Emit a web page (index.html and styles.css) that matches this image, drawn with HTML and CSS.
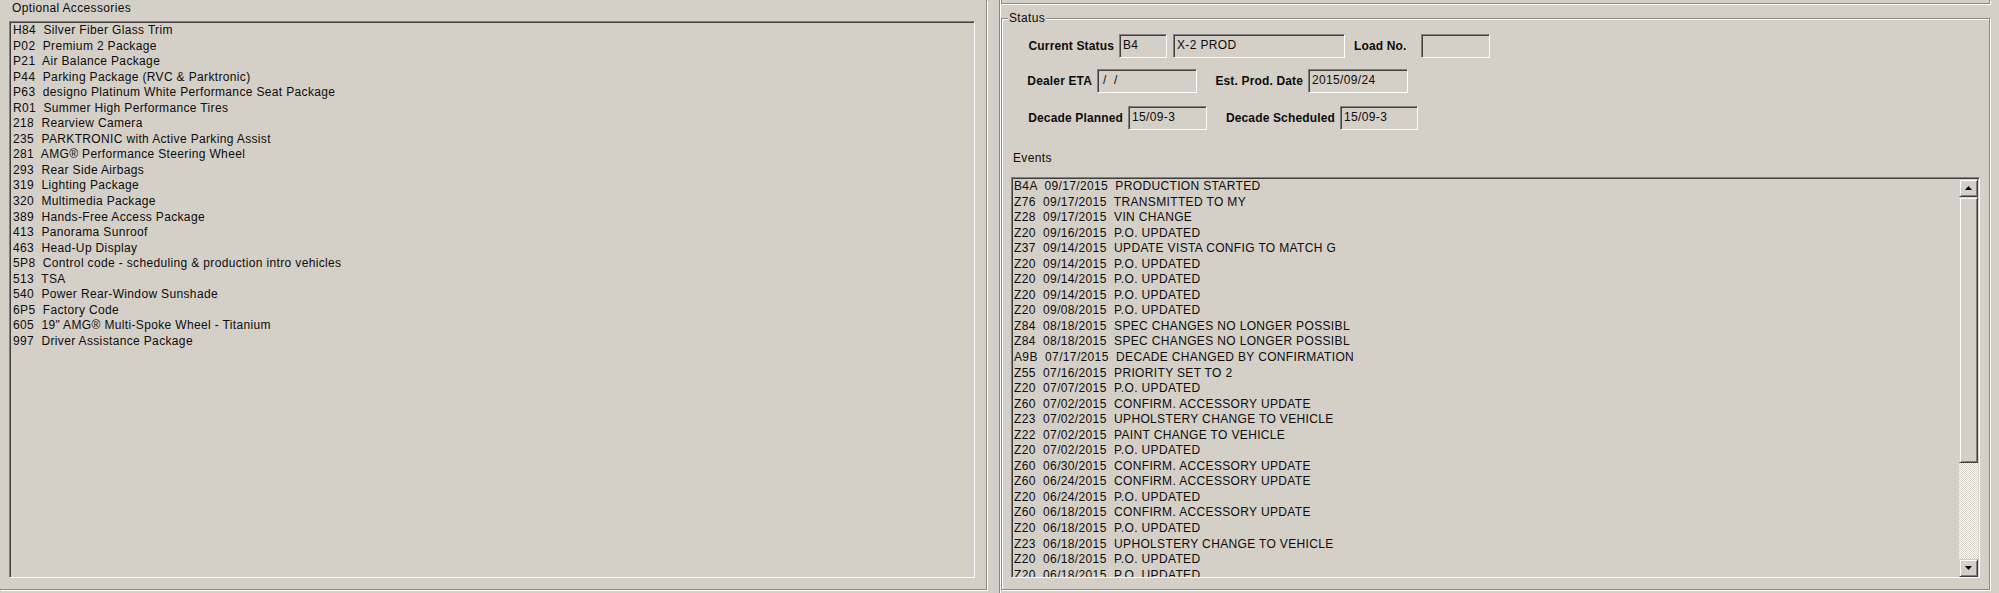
FILE: index.html
```
<!DOCTYPE html>
<html lang="en">
<head>
    <meta charset="UTF-8">
    <title>Vehicle Status</title>
    <link rel="stylesheet" href="styles.css">
</head>
<body>

<div class="window">

    <section class="accessories">
        <div class="caption">Optional Accessories</div>
        <div class="listbox accessory-list">
            <div class="row">H84  Silver Fiber Glass Trim</div>
            <div class="row">P02  Premium 2 Package</div>
            <div class="row">P21  Air Balance Package</div>
            <div class="row">P44  Parking Package (RVC &amp; Parktronic)</div>
            <div class="row">P63  designo Platinum White Performance Seat Package</div>
            <div class="row">R01  Summer High Performance Tires</div>
            <div class="row">218  Rearview Camera</div>
            <div class="row">235  PARKTRONIC with Active Parking Assist</div>
            <div class="row">281  AMG® Performance Steering Wheel</div>
            <div class="row">293  Rear Side Airbags</div>
            <div class="row">319  Lighting Package</div>
            <div class="row">320  Multimedia Package</div>
            <div class="row">389  Hands-Free Access Package</div>
            <div class="row">413  Panorama Sunroof</div>
            <div class="row">463  Head-Up Display</div>
            <div class="row">5P8  Control code - scheduling &amp; production intro vehicles</div>
            <div class="row">513  TSA</div>
            <div class="row">540  Power Rear-Window Sunshade</div>
            <div class="row">6P5  Factory Code</div>
            <div class="row">605  19" AMG® Multi-Spoke Wheel - Titanium</div>
            <div class="row">997  Driver Assistance Package</div>
        </div>
    </section>

    <section class="side">
        <div class="top-strip"></div>

        <div class="groupbox">
            <div class="groupbox-title">Status</div>

            <div class="field-row row-first">
                <label class="lbl lbl-status">Current Status</label>
                <div class="field f-code">B4</div>
                <div class="field f-desc">X-2 PROD</div>
                <label class="lbl lbl-load">Load No.</label>
                <div class="field f-load"></div>
            </div>

            <div class="field-row row-second">
                <label class="lbl lbl-eta">Dealer ETA</label>
                <div class="field f-eta">/  /</div>
                <label class="lbl lbl-prod">Est. Prod. Date</label>
                <div class="field f-prod">2015/09/24</div>
            </div>

            <div class="field-row row-third">
                <label class="lbl lbl-planned">Decade Planned</label>
                <div class="field f-planned">15/09-3</div>
                <label class="lbl lbl-sched">Decade Scheduled</label>
                <div class="field f-sched">15/09-3</div>
            </div>

            <div class="caption events-caption">Events</div>

            <div class="listbox events">
                <div class="event-rows">
                    <div class="row">B4A  09/17/2015  PRODUCTION STARTED</div>
                    <div class="row">Z76  09/17/2015  TRANSMITTED TO MY</div>
                    <div class="row">Z28  09/17/2015  VIN CHANGE</div>
                    <div class="row">Z20  09/16/2015  P.O. UPDATED</div>
                    <div class="row">Z37  09/14/2015  UPDATE VISTA CONFIG TO MATCH G</div>
                    <div class="row">Z20  09/14/2015  P.O. UPDATED</div>
                    <div class="row">Z20  09/14/2015  P.O. UPDATED</div>
                    <div class="row">Z20  09/14/2015  P.O. UPDATED</div>
                    <div class="row">Z20  09/08/2015  P.O. UPDATED</div>
                    <div class="row">Z84  08/18/2015  SPEC CHANGES NO LONGER POSSIBL</div>
                    <div class="row">Z84  08/18/2015  SPEC CHANGES NO LONGER POSSIBL</div>
                    <div class="row">A9B  07/17/2015  DECADE CHANGED BY CONFIRMATION</div>
                    <div class="row">Z55  07/16/2015  PRIORITY SET TO 2</div>
                    <div class="row">Z20  07/07/2015  P.O. UPDATED</div>
                    <div class="row">Z60  07/02/2015  CONFIRM. ACCESSORY UPDATE</div>
                    <div class="row">Z23  07/02/2015  UPHOLSTERY CHANGE TO VEHICLE</div>
                    <div class="row">Z22  07/02/2015  PAINT CHANGE TO VEHICLE</div>
                    <div class="row">Z20  07/02/2015  P.O. UPDATED</div>
                    <div class="row">Z60  06/30/2015  CONFIRM. ACCESSORY UPDATE</div>
                    <div class="row">Z60  06/24/2015  CONFIRM. ACCESSORY UPDATE</div>
                    <div class="row">Z20  06/24/2015  P.O. UPDATED</div>
                    <div class="row">Z60  06/18/2015  CONFIRM. ACCESSORY UPDATE</div>
                    <div class="row">Z20  06/18/2015  P.O. UPDATED</div>
                    <div class="row">Z23  06/18/2015  UPHOLSTERY CHANGE TO VEHICLE</div>
                    <div class="row">Z20  06/18/2015  P.O. UPDATED</div>
                    <div class="row">Z20  06/18/2015  P.O. UPDATED</div>
                </div>
                <div class="scrollbar">
                    <div class="sb-btn">
                        <svg width="7" height="4" viewBox="0 0 7 4"><path d="M0 4h7L3.5 0z"/></svg>
                    </div>
                    <div class="sb-thumb"></div>
                    <div class="sb-track"></div>
                    <div class="sb-btn">
                        <svg width="7" height="4" viewBox="0 0 7 4"><path d="M0 0h7L3.5 4z"/></svg>
                    </div>
                </div>
            </div>
        </div>
    </section>

</div>

</body>
</html>
```

FILE: styles.css
```
* {
    box-sizing: border-box;
}
body {
    margin: 0;
    background-color: #d4d0c8;
    color: #0c0c0c;
    font-family: "Liberation Sans", Arial, sans-serif;
    font-size: 12px;
    letter-spacing: 0.35px;
    overflow: hidden;
}
.window {
    display: flex;
    height: 593px;
}

/* left side: accessories */
.accessories {
    width: 987px;
    height: 590px;
    border-right: 1px solid #8c8a84;
    border-bottom: 1px solid #8c8a84;
    box-shadow: 1px 1px 0 #fff;
}
.caption {
    height: 16px;
    line-height: 16px;
    padding-left: 12px;
}
.listbox {
    border: 1px solid;
    border-color: #808080 #fff #fff #808080;
    box-shadow: inset 1px 1px #404040, inset -1px -1px #d4d0c8;
}
.accessory-list {
    margin: 5px 0 0 9px;
    width: 966px;
    height: 557px;
    padding: 1px 0 0 3px;
}
.row {
    height: 15.56px;
    line-height: 15.56px;
    white-space: pre;
}

/* right side: status */
.side {
    flex: 1;
    margin-left: 12px;
    padding-left: 1px;
    border-left: 1px solid #8c8a84;
    box-shadow: inset 1px 0 #fff;
}
.top-strip {
    width: 989px;
    height: 4px;
    border: 1px solid #8c8a84;
    border-top: none;
    box-shadow: 1px 1px 0 #fff;
}
.groupbox {
    width: 989px;
    height: 572px;
    margin-top: 14px;
    border: 1px solid #8c8a84;
    box-shadow: inset 1px 1px #fff, 1px 1px 0 #fff;
}
.groupbox-title {
    width: max-content;
    margin: -9px 0 0 6px;
    padding: 0 1px;
    line-height: 16px;
    background-color: #d4d0c8;
}
.field-row {
    display: flex;
    align-items: center;
    height: 24px;
}
.row-first {
    margin-top: 8px;
}
.row-second {
    margin-top: 11px;
}
.row-third {
    margin-top: 13px;
}
.lbl {
    font-weight: bold;
    letter-spacing: 0.15px;
    text-align: right;
    padding-right: 5px;
    white-space: nowrap;
}
.field {
    height: 24px;
    line-height: 20px;
    padding-left: 3px;
    white-space: pre;
    border: 1px solid;
    border-color: #808080 #fff #fff #808080;
    box-shadow: inset 1px 1px #404040, inset -1px -1px #d4d0c8;
}
.lbl-status { width: 117px; }
.f-code { width: 48px; }
.f-desc { width: 172px; margin-left: 6px; }
.lbl-load {
    width: 76px;
    text-align: left;
    padding: 0 0 0 9px;
}
.f-load { width: 69px; }
.lbl-eta { width: 95px; }
.f-eta { width: 100px; padding-left: 5px; }
.lbl-prod { width: 111px; }
.f-prod { width: 100px; }
.lbl-planned { width: 126px; }
.f-planned { width: 79px; }
.lbl-sched { width: 133px; }
.f-sched { width: 78px; }

.events-caption {
    margin-top: 20px;
    padding-left: 11px;
}
.events {
    display: flex;
    width: 969px;
    height: 401px;
    margin: 11px 0 0 9px;
}
.event-rows {
    flex: 1;
    overflow: hidden;
    padding: 1px 0 0 2px;
}

/* scrollbar */
.scrollbar {
    display: flex;
    flex-direction: column;
    width: 19px;
    margin: 1px 1px 0 0;
}
.sb-btn, .sb-thumb {
    background-color: #d4d0c8;
    border: 1px solid;
    border-color: #d4d0c8 #404040 #404040 #d4d0c8;
    box-shadow: inset 1px 1px #fff, inset -1px -1px #808080;
}
.sb-btn {
    height: 18px;
    display: flex;
    align-items: center;
    justify-content: center;
}
.sb-thumb {
    height: 266px;
}
.sb-track {
    flex: 1;
    background: repeating-conic-gradient(#fff 0 25%, #d4d0c8 0 50%) 0 0 / 2px 2px;
}
```
